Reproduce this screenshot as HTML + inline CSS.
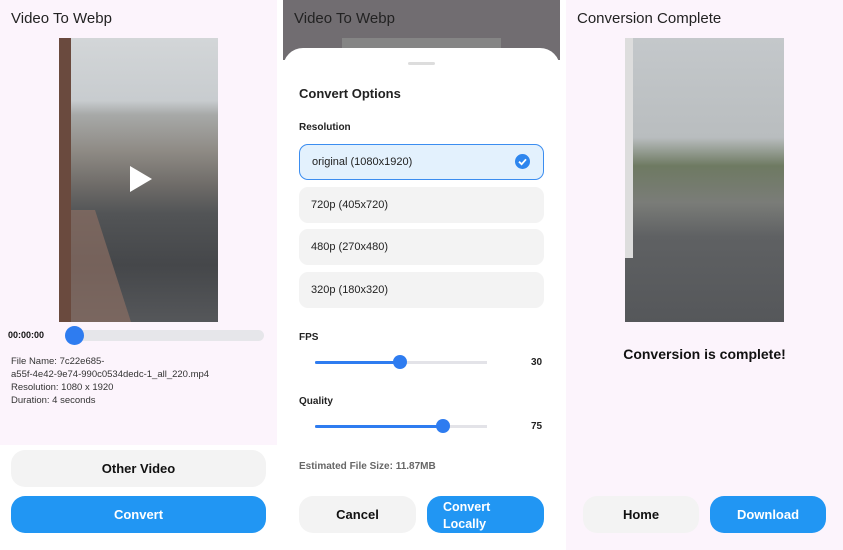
<!DOCTYPE html>
<html><head><style>
*{margin:0;padding:0;box-sizing:border-box}
body{width:843px;height:550px;background:#fff;font-family:"Liberation Sans",sans-serif;position:relative;overflow:hidden}
.a{position:absolute}
.p{background:#fcf4fc}
.btn{position:absolute;border-radius:14px;display:flex;align-items:center;justify-content:center;font-weight:bold;font-size:13px}
.g{background:#f3f3f3;color:#111}
.b{background:#2196f3;color:#fff}
.opt{position:absolute;left:299px;width:245px;height:36px;border-radius:9px;background:#f3f3f3;font-size:11px;color:#222;padding-left:12px;line-height:37px}
</style></head><body>
<!-- panel 1 -->
<div class="a p" style="left:0;top:0;width:277px;height:445px"></div>
<div class="a" style="left:11px;top:10px;font-size:15px;color:#222">Video To Webp</div>
<div class="a" style="left:59px;top:38px;width:159px;height:284px;background:linear-gradient(180deg,#d3d6d8 0%,#c8cccf 22%,#a7a9a8 27%,#8e8a84 40%,#6e6b68 52%,#525456 62%,#45474a 80%,#55575a 100%)"></div>
<div class="a" style="left:59px;top:38px;width:12px;height:284px;background:#6a4a3e"></div>
<div class="a" style="left:71px;top:210px;width:60px;height:112px;background:#8a6e62;opacity:.7;clip-path:polygon(0 0,40% 0,100% 100%,0 100%)"></div>
<svg class="a" style="left:128px;top:164px" width="26" height="30"><path d="M2 2 L24 15 L2 28 Z" fill="#fff"/></svg>
<div class="a" style="left:8px;top:330px;font-size:9px;font-weight:bold;color:#111">00:00:00</div>
<div class="a" style="left:65px;top:330px;width:199px;height:11px;border-radius:6px;background:#e6e6ea"></div>
<div class="a" style="left:65px;top:326px;width:19px;height:19px;border-radius:50%;background:#2e7cf0"></div>
<div class="a" style="left:11px;top:355px;font-size:9.5px;color:#333;line-height:13px">File Name: 7c22e685-<br>a55f-4e42-9e74-990c0534dedc-1_all_220.mp4<br>Resolution: 1080 x 1920<br>Duration: 4 seconds</div>
<div class="btn g" style="left:11px;top:450px;width:255px;height:37px">Other Video</div>
<div class="btn b" style="left:11px;top:496px;width:255px;height:37px">Convert</div>
<!-- panel 2 -->
<div class="a" style="left:283px;top:0;width:277px;height:60px;background:#716d71"></div>
<div class="a" style="left:294px;top:10px;font-size:15px;color:#222">Video To Webp</div>
<div class="a" style="left:342px;top:38px;width:159px;height:20px;background:#858585"></div>
<div class="a" style="left:283px;top:48px;width:277px;height:502px;background:#fff;border-radius:20px 20px 0 0"></div>
<div class="a" style="left:408px;top:62px;width:27px;height:3px;border-radius:2px;background:#ddd"></div>
<div class="a" style="left:299px;top:86px;font-size:13px;font-weight:bold;color:#222">Convert Options</div>
<div class="a" style="left:299px;top:122px;font-size:10px;font-weight:bold;color:#222">Resolution</div>
<div class="opt" style="top:144px;background:#e3f1fd;border:1.5px solid #3b8df0;line-height:35px">original (1080x1920)</div>
<svg class="a" style="left:515px;top:154px" width="15" height="15"><circle cx="7.5" cy="7.5" r="7.5" fill="#2e86ee"/><path d="M4 7.7 L6.6 10.2 L11 5.3" stroke="#fff" stroke-width="1.8" fill="none"/></svg>
<div class="opt" style="top:187px">720p (405x720)</div>
<div class="opt" style="top:229px">480p (270x480)</div>
<div class="opt" style="top:272px">320p (180x320)</div>
<div class="a" style="left:299px;top:332px;font-size:10px;font-weight:bold;color:#222">FPS</div>
<div class="a" style="left:315px;top:361px;width:172px;height:3px;background:#e3e3e8"></div>
<div class="a" style="left:315px;top:361px;width:85px;height:3px;background:#2e7cf0;border-radius:2px"></div>
<div class="a" style="left:393px;top:355px;width:14px;height:14px;border-radius:50%;background:#2e7cf0"></div>
<div class="a" style="left:531px;top:357px;font-size:10px;font-weight:bold;color:#222">30</div>
<div class="a" style="left:299px;top:396px;font-size:10px;font-weight:bold;color:#222">Quality</div>
<div class="a" style="left:315px;top:425px;width:172px;height:3px;background:#e3e3e8"></div>
<div class="a" style="left:315px;top:425px;width:128px;height:3px;background:#2e7cf0;border-radius:2px"></div>
<div class="a" style="left:436px;top:419px;width:14px;height:14px;border-radius:50%;background:#2e7cf0"></div>
<div class="a" style="left:531px;top:421px;font-size:10px;font-weight:bold;color:#222">75</div>
<div class="a" style="left:299px;top:461px;font-size:10px;font-weight:bold;color:#666">Estimated File Size: 11.87MB</div>
<div class="btn g" style="left:299px;top:496px;width:117px;height:37px">Cancel</div>
<div class="btn b" style="left:427px;top:496px;width:117px;height:37px;justify-content:flex-start;padding-left:16px;padding-top:2px;line-height:17px;font-size:12.5px">Convert<br>Locally</div>
<!-- panel 3 -->
<div class="a p" style="left:566px;top:0;width:277px;height:550px"></div>
<div class="a" style="left:577px;top:10px;font-size:15px;color:#222">Conversion Complete</div>
<div class="a" style="left:625px;top:38px;width:159px;height:284px;background:linear-gradient(180deg,#c4c8cb 0%,#b9bdbf 35%,#6e7a62 45%,#7a7c78 58%,#5f6163 70%,#55575a 100%)"></div>
<div class="a" style="left:625px;top:38px;width:8px;height:220px;background:#ddd"></div>
<div class="a" style="left:566px;top:346px;width:277px;text-align:center;font-size:14px;font-weight:bold;color:#111">Conversion is complete!</div>
<div class="btn g" style="left:583px;top:496px;width:116px;height:37px">Home</div>
<div class="btn b" style="left:710px;top:496px;width:116px;height:37px">Download</div>
</body></html>
